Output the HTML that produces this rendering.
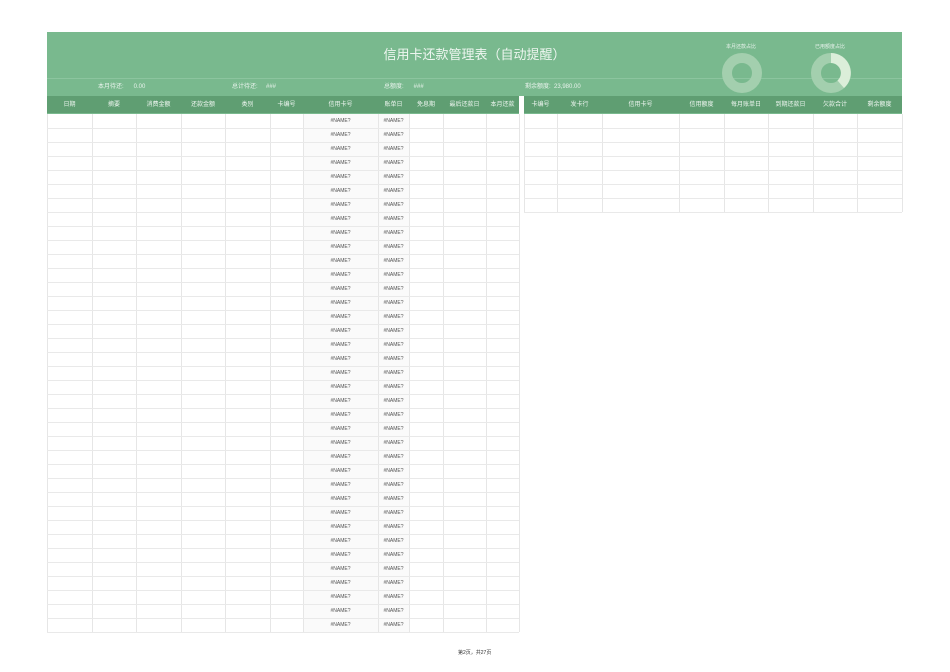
<!DOCTYPE html>
<html><head><meta charset="utf-8">
<style>
body{margin:0;width:950px;height:672px;background:#fff;position:relative;overflow:hidden;font-family:"Liberation Sans","Noto Sans CJK SC",sans-serif;}
.a{position:absolute;}
.t{font-size:6px;color:#e8f3ec;white-space:nowrap;}
.h{font-size:6px;color:#eef6f0;text-align:center;line-height:18px;top:96px;height:18px;}
.c{font-size:5px;color:#555;text-align:center;line-height:14px;}
</style></head><body>
<div class="a" style="left:47px;top:32px;width:855px;height:64px;background:#79b98e"></div>
<div class="a" style="left:47px;top:78px;width:855px;height:1px;background:#8cc59f"></div>
<div class="a" style="left:47px;top:96px;width:472px;height:18px;background:#5f9e72"></div>
<div class="a" style="left:524px;top:96px;width:378px;height:18px;background:#5f9e72"></div>
<div class="a" style="left:47px;top:113px;width:472px;height:1px;background:#79b98e"></div>
<div class="a" style="left:524px;top:113px;width:378px;height:1px;background:#79b98e"></div>
<div class="a" style="left:47px;top:44px;width:855px;text-align:center;font-size:13px;color:#eef6f0">信用卡还款管理表（自动提醒）</div>
<div class="a t" style="left:98px;top:81px">本月待还:&nbsp;&nbsp;&nbsp;&nbsp;&nbsp;&nbsp;0.00</div>
<div class="a t" style="left:232px;top:81px">总计待还:&nbsp;&nbsp;&nbsp;&nbsp;&nbsp;###</div>
<div class="a t" style="left:384px;top:81px">总额度:&nbsp;&nbsp;&nbsp;&nbsp;&nbsp;&nbsp;###</div>
<div class="a t" style="left:525px;top:81px">剩余额度:&nbsp;&nbsp;23,980.00</div>
<div class="a t" style="left:726px;top:43px;font-size:5px">本月还款占比</div>
<div class="a t" style="left:815px;top:43px;font-size:5px">已用额度占比</div>
<svg class="a" style="left:700px;top:50px" width="170" height="46">
<circle cx="42" cy="23" r="15" fill="none" stroke="#a3cfae" stroke-width="10"/>
<circle cx="131" cy="23" r="15" fill="none" stroke="#a3cfae" stroke-width="10"/>
<path d="M131 3 A20 20 0 0 1 144 38 L137.5 30.5 A10 10 0 0 0 131 13 Z" fill="#dbeed9"/>
</svg>
<div id="g"></div>
<div class="a" style="left:458px;top:649px;font-size:5px;color:#333">第2页，共27页</div>
<script>
var L=[47,92,136,181,225,270,303,378,409,443,486,519],R=[524,557,602,679,724,768,813,857,902];
var LH=["日期","摘要","消费金额","还款金额","类别","卡编号","信用卡号","账单日","免息期","最后还款日","本月还款"];
var RH=["卡编号","发卡行","信用卡号","信用额度","每月账单日","到期还款日","欠款合计","剩余额度"];
var s="";
function tbl(X,H,n){
 for(var i=0;i<H.length;i++)s+='<div class="a h" style="left:'+X[i]+'px;width:'+(X[i+1]-X[i])+'px">'+H[i]+'</div>';
 var b=114+n*14;
 for(var i=0;i<X.length;i++)s+='<div class="a" style="left:'+X[i]+'px;top:114px;width:1px;height:'+(n*14)+'px;background:#e6e6e6"></div>';
 for(var r=1;r<=n;r++)s+='<div class="a" style="left:'+X[0]+'px;top:'+(114+r*14)+'px;width:'+(X[X.length-1]-X[0])+'px;height:1px;background:#e9e9e9"></div>';
}
s+='<div class="a" style="left:303px;top:114px;width:106px;height:518px;background:#fafafa"></div>';
tbl(L,LH,37);tbl(R,RH,7);
for(var r=0;r<37;r++){var y=114+r*14;
 s+='<div class="a c" style="left:303px;top:'+y+'px;width:75px">#NAME?</div>';
 s+='<div class="a c" style="left:378px;top:'+y+'px;width:31px">#NAME?</div>';}
document.getElementById("g").innerHTML=s;
</script>
</body></html>
